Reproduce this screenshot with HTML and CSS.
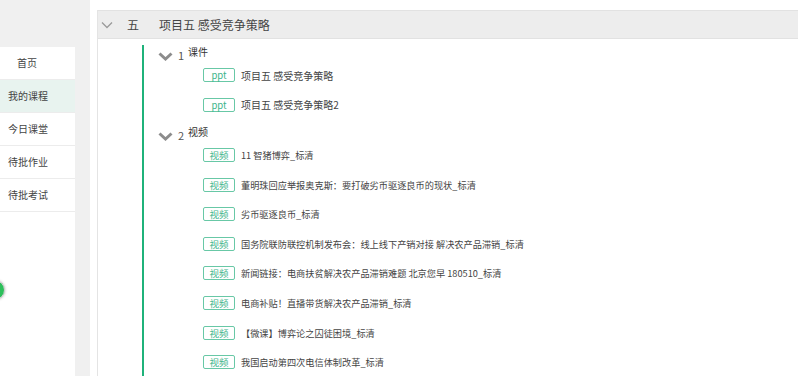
FILE: index.html
```html
<!DOCTYPE html>
<html lang="zh-CN">
<head>
    <meta charset="UTF-8">
    <title>我的课程</title>
    <link rel="stylesheet" href="styles.css">
</head>
<body>
    <div class="page">
        <div class="sidebar">
            <a class="nav-item">首页</a>
            <a class="nav-item active">我的课程</a>
            <a class="nav-item">今日课堂</a>
            <a class="nav-item">待批作业</a>
            <a class="nav-item">待批考试</a>
        </div>
        <div class="main">
            <div class="chapter">
                <div class="chapter-head">
                    <svg class="chev-thin" width="12" height="8" viewBox="0 0 12 8"><polyline points="1,1.5 6,6.5 11,1.5" fill="none" stroke="#9a9a9a" stroke-width="1.3"/></svg>
                    <span class="chapter-no">五</span>
                    <span class="chapter-title">项目五 感受竞争策略</span>
                </div>
                <div class="tree">
                    <div class="section">
                        <div class="section-head">
                            <svg class="chev-bold" width="15" height="9" viewBox="0 0 15 9"><polyline points="1.5,1.5 7.5,7 13.5,1.5" fill="none" stroke="#8c8c8c" stroke-width="3"/></svg>
                            <span class="sec-no">1</span>
                            <span class="sec-name">课件</span>
                        </div>
                        <div class="items">
                            <div class="item"><span class="tag">ppt</span><span class="item-name">项目五 感受竞争策略</span></div>
                            <div class="item"><span class="tag">ppt</span><span class="item-name">项目五 感受竞争策略2</span></div>
                        </div>
                    </div>
                    <div class="section videos">
                        <div class="section-head">
                            <svg class="chev-bold" width="15" height="9" viewBox="0 0 15 9"><polyline points="1.5,1.5 7.5,7 13.5,1.5" fill="none" stroke="#8c8c8c" stroke-width="3"/></svg>
                            <span class="sec-no">2</span>
                            <span class="sec-name">视频</span>
                        </div>
                        <div class="items">
                            <div class="item"><span class="tag">视频</span><span class="item-name">11 智猪博弈_标清</span></div>
                            <div class="item"><span class="tag">视频</span><span class="item-name">董明珠回应举报奥克斯：要打破劣币驱逐良币的现状_标清</span></div>
                            <div class="item"><span class="tag">视频</span><span class="item-name">劣币驱逐良币_标清</span></div>
                            <div class="item"><span class="tag">视频</span><span class="item-name">国务院联防联控机制发布会：线上线下产销对接 解决农产品滞销_标清</span></div>
                            <div class="item"><span class="tag">视频</span><span class="item-name">新闻链接：电商扶贫解决农产品滞销难题 北京您早 180510_标清</span></div>
                            <div class="item"><span class="tag">视频</span><span class="item-name">电商补贴！直播带货解决农产品滞销_标清</span></div>
                            <div class="item"><span class="tag">视频</span><span class="item-name">【微课】博弈论之囚徒困境_标清</span></div>
                            <div class="item"><span class="tag">视频</span><span class="item-name">我国启动第四次电信体制改革_标清</span></div>
                        </div>
                    </div>
                </div>
            </div>
        </div>
    </div>
    <div class="float-btn"></div>
</body>
</html>
```

FILE: styles.css
```css
html, body {
    margin: 0;
    height: 100%;
    overflow: hidden;
}
body {
    background-color: #f0f0f0;
    font-family: "Noto Sans CJK SC", "Noto Sans", sans-serif;
    color: #444;
}
.page {
    display: flex;
    height: 100%;
}
.sidebar {
    width: 75px;
    margin-top: 47px;
    background-color: #fff;
    display: flex;
    flex-direction: column;
    flex-shrink: 0;
}
.nav-item {
    display: block;
    height: 32px;
    line-height: 31px;
    border-bottom: 1px solid #ececec;
    font-size: 10px;
    color: #444;
    padding-left: 8px;
}
.nav-item:first-child { padding-left: 17px; }
.nav-item.active { background-color: #e8f3ef; }
.main {
    flex: 1;
    margin-left: 15px;
    background-color: #fff;
    padding: 10px 0 0 7px;
    min-width: 0;
}
.chapter {
    border-left: 1px solid #e4e4e4;
    height: 100%;
}
.chapter-head {
    display: flex;
    align-items: center;
    height: 27px;
    background-color: #ededed;
    border-top: 1px solid #e2e2e2;
    border-bottom: 1px solid #e2e2e2;
    font-size: 12px;
    color: #444;
}
.chev-thin { margin-left: 3px; }
.chapter-no { margin-left: 14px; width: 32px; }
.tree {
    margin: 6px 0 0 44px;
    border-left: 2px solid #1fb27a;
    padding-left: 14px;
    height: 340px;
}
.section { margin-bottom: 13.4px; }
.section-head {
    display: flex;
    align-items: flex-start;
    height: 16px;
    margin-bottom: 7px;
}
.chev-bold { margin-top: 7px; }
.sec-no {
    font-size: 11px;
    margin-left: 5px;
    line-height: 20px;
    color: #555;
}
.sec-name {
    font-size: 10px;
    margin-left: 4px;
    line-height: 14px;
    color: #333;
}
.items {
    display: flex;
    flex-direction: column;
    gap: 15.6px;
    padding-left: 45px;
}
.item {
    display: flex;
    align-items: center;
    height: 14px;
}
.tag {
    width: 30px;
    height: 12px;
    line-height: 12px;
    border: 1px solid #68c8a6;
    border-radius: 2px;
    color: #3db58b;
    font-size: 9.5px;
    text-align: center;
}
.item-name {
    margin-left: 6px;
    font-size: 10px;
    color: #444;
    white-space: nowrap;
}
.videos .item-name { font-size: 9.2px; }
.float-btn {
    position: absolute;
    left: -15px;
    top: 280px;
    width: 18px;
    height: 18px;
    border-radius: 50%;
    background-color: #2dbf5b;
    border: 1px solid #d0d0d0;
    box-shadow: 0 0 3px rgba(0, 0, 0, 0.3);
}
```
